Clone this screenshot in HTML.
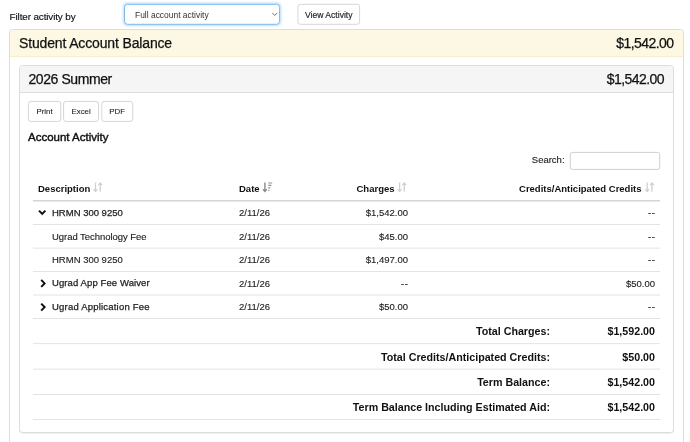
<!DOCTYPE html>
<html>
<head>
<meta charset="utf-8">
<style>
*{box-sizing:border-box;margin:0;padding:0}
html,body{width:690px;height:442px;overflow:hidden;background:#fff}
body{will-change:transform;font-family:"Liberation Sans",sans-serif;color:#000;position:relative;font-size:9.5px}
.abs{position:absolute;white-space:nowrap}
.lbl{left:9.6px;top:10.3px;font-size:9.9px;letter-spacing:-0.12px;line-height:14px;color:#111;-webkit-text-stroke:0.15px #111}
.sel{left:135px;top:4.9px;font-size:8.45px;line-height:20px;color:#333}
.btn{border:1px solid #ccc;border-radius:3px;background:#fff;color:#222;text-align:center}
.nb{border:none;background:none;-webkit-text-stroke:0.15px #222}
.view{left:297.9px;top:4.9px;width:61.7px;font-size:8.6px;line-height:20px}
.h1{font-size:14px;line-height:18px;color:#111;-webkit-text-stroke:0.25px #111}
.sb{font-size:7.9px;-webkit-text-stroke:0.08px #222;line-height:20px;height:20px;top:101.8px}
.aa{left:28px;top:130.3px;font-size:11.5px;line-height:14px;color:#111;-webkit-text-stroke:0.42px #111}
.search{left:531.8px;top:153px;font-size:9.5px;line-height:14px;color:#1c1c1c;-webkit-text-stroke:0.12px #1c1c1c}
.sinput{left:570px;top:152px;width:90px;height:17px;border:1px solid #ccc;border-radius:2px;background:#fff}
.th{font-size:9.5px;font-weight:bold;line-height:12px;color:#111;top:182.5px}
.td{font-size:9.5px;line-height:12px;color:#1c1c1c;-webkit-text-stroke:0.12px #1c1c1c}
.m{-webkit-text-stroke:0.25px #222}
.r{text-align:right}
.tot{font-size:10.7px;font-weight:bold;line-height:14px;color:#111;text-align:right}
</style>
</head>
<body>
<svg class="abs" style="left:0;top:0" width="690" height="442" viewBox="0 0 690 442">
<rect x="9.5" y="29.5" width="674" height="430" rx="3" fill="#fff" stroke="#dddddd"/>
<path d="M10 33 Q10 30 13 30 H680 Q683 30 683 33 V56.5 H10 Z" fill="#fcf8e3"/>
<rect x="10" y="56" width="673" height="1" fill="#faebcc"/>
<rect x="19.5" y="66.5" width="654" height="367" rx="3" fill="none" stroke="#000" stroke-opacity="0.07"/>
<rect x="19.5" y="65.5" width="654" height="367" rx="3" fill="#fff" stroke="#dddddd"/>
<path d="M20 69 Q20 66 23 66 H670 Q673 66 673 69 V92.5 H20 Z" fill="#f5f5f5"/>
<rect x="20" y="92" width="653" height="1" fill="#dddddd"/>
<rect x="124.5" y="4.3" width="155.1" height="20" rx="3" fill="none" stroke="#66afe9" stroke-opacity="0.10" stroke-width="6"/>
<rect x="124.5" y="4.3" width="155.1" height="20" rx="3" fill="none" stroke="#66afe9" stroke-opacity="0.18" stroke-width="3.4"/>
<rect x="124.5" y="4.3" width="155.1" height="20" rx="3" fill="#fff" stroke="#7ab8ec" stroke-width="1"/>
<path d="M272.2 12.9 L274.7 15.5 L277.2 12.9" fill="none" stroke="#666" stroke-width="0.9"/>
<rect x="297.9" y="4.3" width="61.7" height="20" rx="2.5" fill="#fff" stroke="#d6d6d6"/>
<rect x="570.3" y="152.4" width="89.4" height="17" rx="2" fill="#fff" stroke="#cfcfcf"/>
<rect x="28.4" y="101.4" width="32.4" height="20" rx="2.5" fill="#fff" stroke="#d6d6d6"/>
<rect x="63.6" y="101.4" width="35.0" height="20" rx="2.5" fill="#fff" stroke="#d6d6d6"/>
<rect x="101.8" y="101.4" width="30.9" height="20" rx="2.5" fill="#fff" stroke="#d6d6d6"/>
<rect x="33" y="200" width="627" height="1.5" fill="#d4d4d4"/>
<rect x="33" y="224.0" width="627" height="0.8" fill="#dddddd"/>
<rect x="33" y="247.7" width="627" height="0.8" fill="#dddddd"/>
<rect x="33" y="271.1" width="627" height="0.8" fill="#dddddd"/>
<rect x="33" y="294.6" width="627" height="0.8" fill="#dddddd"/>
<rect x="33" y="318.0" width="627" height="0.8" fill="#dddddd"/>
<rect x="33" y="343.3" width="627" height="0.8" fill="#dddddd"/>
<rect x="33" y="368.7" width="627" height="0.8" fill="#dddddd"/>
<rect x="33" y="394.0" width="627" height="0.8" fill="#dddddd"/>
<rect x="33" y="419.1" width="627" height="0.8" fill="#dddddd"/>
<g transform="translate(93.3,182.5)" fill="none" stroke="#d0d0d0" stroke-width="1.3"><path d="M2.2 0 V8.8 M0.3 6.8 L2.2 9 L4.1 6.8"/><path d="M6.9 9.2 V0.5 M5 2.6 L6.9 0.4 L8.8 2.6"/></g>
<g transform="translate(262.6,182.5)" fill="none" stroke="#8c8c8c" stroke-width="1.4"><path d="M2.3 0 V8.8 M0.4 6.8 L2.3 9 L4.2 6.8"/><path d="M5.7 0.5 H9.6 M5.7 2.9 H8.7 M5.7 5.3 H7.8 M5.7 7.9 H6.8" stroke-width="1.2"/></g>
<g transform="translate(397.4,182.5)" fill="none" stroke="#d0d0d0" stroke-width="1.3"><path d="M2.2 0 V8.8 M0.3 6.8 L2.2 9 L4.1 6.8"/><path d="M6.9 9.2 V0.5 M5 2.6 L6.9 0.4 L8.8 2.6"/></g>
<g transform="translate(645,182.5)" fill="none" stroke="#d0d0d0" stroke-width="1.3"><path d="M2.2 0 V8.8 M0.3 6.8 L2.2 9 L4.1 6.8"/><path d="M6.9 9.2 V0.5 M5 2.6 L6.9 0.4 L8.8 2.6"/></g>
<path d="M39.0 210.6 l3.2 3.3 l3.2 -3.3" fill="none" stroke="#111" stroke-width="2"/>
<path d="M41.2 279.9 l3.4 3.5 l-3.4 3.5" fill="none" stroke="#111" stroke-width="2"/>
<path d="M41.2 303.6 l3.4 3.5 l-3.4 3.5" fill="none" stroke="#111" stroke-width="2"/>
</svg>
<div class="abs lbl">Filter activity by</div>
<div class="abs sel">Full account activity</div>
<div class="abs btn nb view">View Activity</div>
<div class="abs h1" style="left:19px;top:34px;letter-spacing:-0.15px">Student Account Balance</div>
<div class="abs h1 r" style="right:16.5px;top:34px;letter-spacing:-0.55px">$1,542.00</div>
<div class="abs h1" style="left:28.5px;top:70.3px;letter-spacing:-0.42px">2026 Summer</div>
<div class="abs h1 r" style="right:26px;top:70.3px;letter-spacing:-0.55px">$1,542.00</div>
<div class="abs btn nb sb" style="left:28.4px;width:32.4px">Print</div>
<div class="abs btn nb sb" style="left:63.6px;width:35px">Excel</div>
<div class="abs btn nb sb" style="left:101.8px;width:30.9px">PDF</div>
<div class="abs aa">Account Activity</div>
<div class="abs search">Search:</div>
<div class="abs th" style="left:38px">Description</div>
<div class="abs th" style="left:239px">Date</div>
<div class="abs th r" style="right:295.5px">Charges</div>
<div class="abs th r" style="right:48.5px">Credits/Anticipated Credits</div>
<div class="abs td m" style="left:52px;top:206.5px;letter-spacing:0px">HRMN 300 9250</div>
<div class="abs td" style="left:239px;top:206.8px">2/11/26</div>
<div class="abs td r" style="right:282px;top:206.8px">$1,542.00</div>
<div class="abs td r" style="right:34.2px;top:206.8px;letter-spacing:0.8px;color:#333">--</div>
<div class="abs td" style="left:52px;top:230.6px;letter-spacing:-0.05px">Ugrad Technology Fee</div>
<div class="abs td" style="left:239px;top:230.6px">2/11/26</div>
<div class="abs td r" style="right:282px;top:230.6px">$45.00</div>
<div class="abs td r" style="right:34.2px;top:230.6px;letter-spacing:0.8px;color:#333">--</div>
<div class="abs td" style="left:52px;top:254.3px;letter-spacing:0px">HRMN 300 9250</div>
<div class="abs td" style="left:239px;top:254.3px">2/11/26</div>
<div class="abs td r" style="right:282px;top:254.3px">$1,497.00</div>
<div class="abs td r" style="right:34.2px;top:254.3px;letter-spacing:0.8px;color:#333">--</div>
<div class="abs td m" style="left:52px;top:277.4px;letter-spacing:0.1px">Ugrad App Fee Waiver</div>
<div class="abs td" style="left:239px;top:277.7px">2/11/26</div>
<div class="abs td r" style="right:281.2px;top:277.7px;letter-spacing:0.8px;color:#333">--</div>
<div class="abs td r" style="right:35px;top:277.7px">$50.00</div>
<div class="abs td m" style="left:52px;top:300.9px;letter-spacing:0.2px">Ugrad Application Fee</div>
<div class="abs td" style="left:239px;top:301.2px">2/11/26</div>
<div class="abs td r" style="right:282px;top:301.2px">$50.00</div>
<div class="abs td r" style="right:34.2px;top:301.2px;letter-spacing:0.8px;color:#333">--</div>
<div class="abs tot" style="right:140px;top:324.2px">Total Charges:</div>
<div class="abs tot" style="right:35px;top:324.2px">$1,592.00</div>
<div class="abs tot" style="right:140px;top:349.5px">Total Credits/Anticipated Credits:</div>
<div class="abs tot" style="right:35px;top:349.5px">$50.00</div>
<div class="abs tot" style="right:140px;top:374.9px">Term Balance:</div>
<div class="abs tot" style="right:35px;top:374.9px">$1,542.00</div>
<div class="abs tot" style="right:140px;top:400.2px">Term Balance Including Estimated Aid:</div>
<div class="abs tot" style="right:35px;top:400.2px">$1,542.00</div>
</body>
</html>
